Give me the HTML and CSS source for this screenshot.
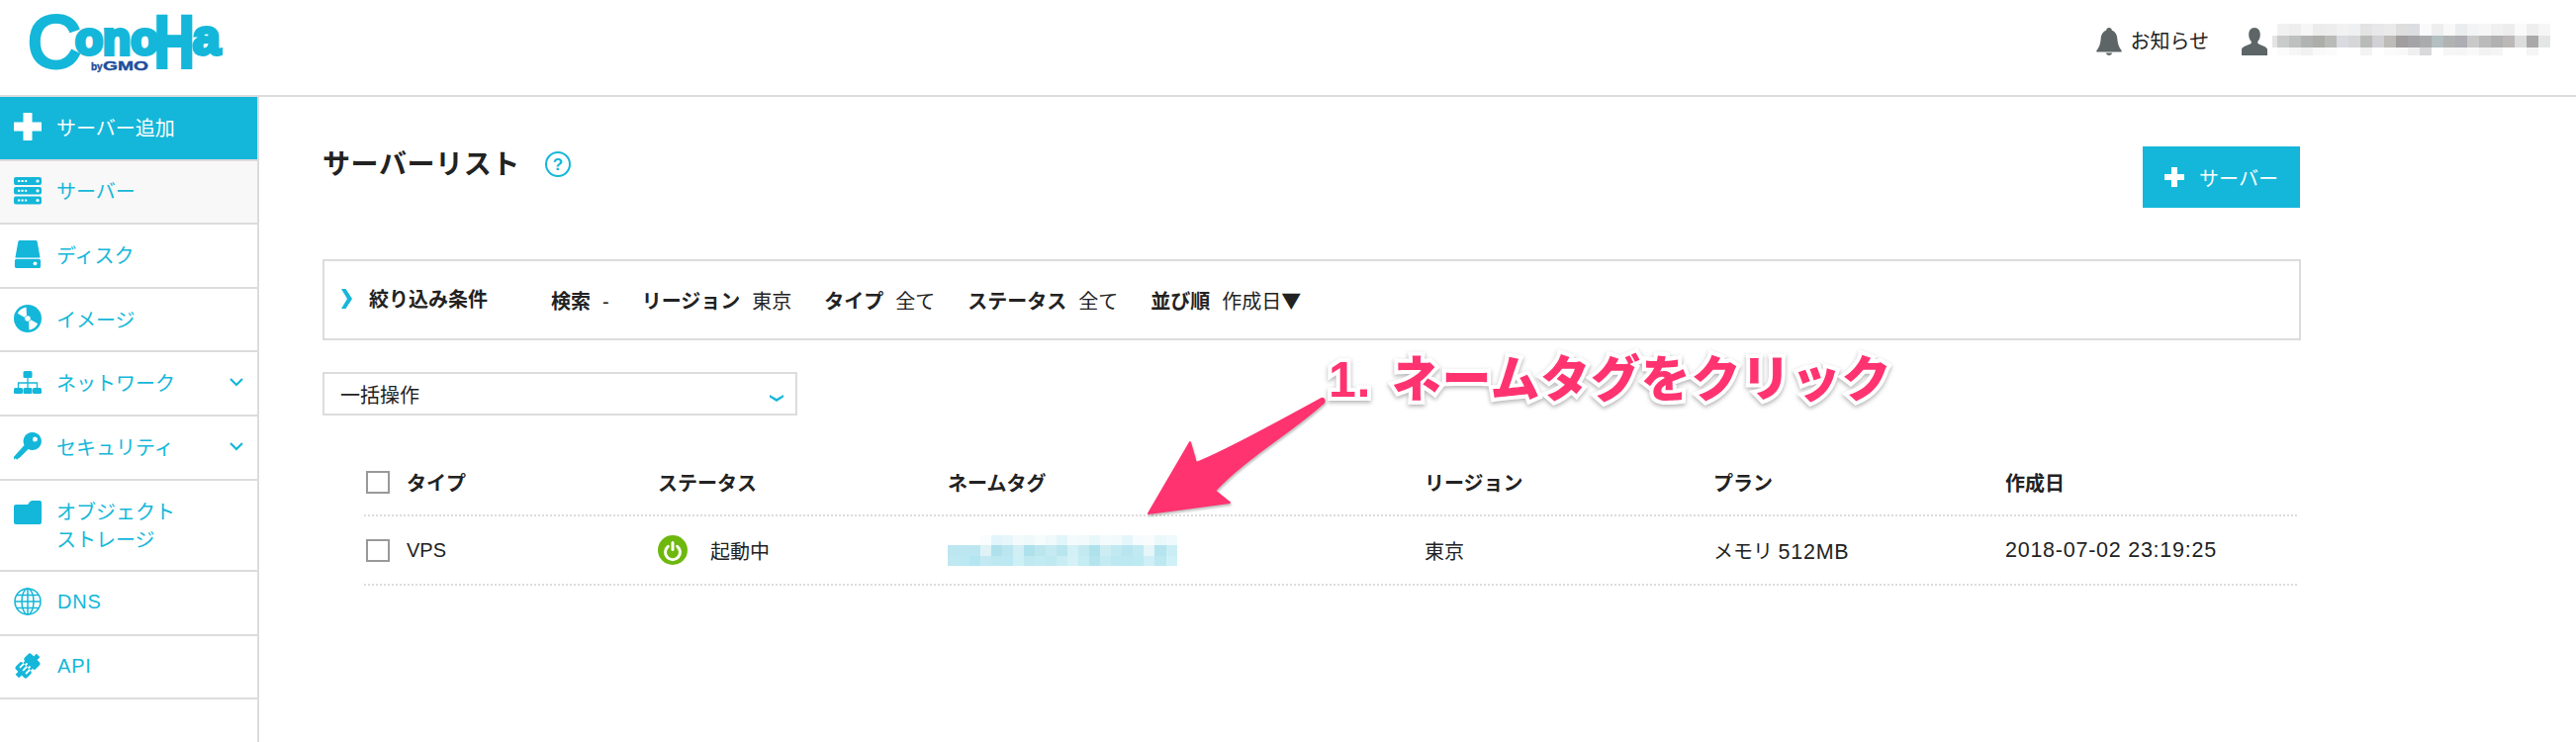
FILE: index.html
```html
<!DOCTYPE html>
<html lang="ja">
<head>
  <meta charset="UTF-8" />
  <title>ConoHa サーバーリスト</title>
  <link rel="stylesheet" href="styles.css">
</head>
<body>

  <!-- Header -->
  <header class="topbar">
    <svg class="logo" width="220" height="90" viewBox="0 0 220 90" role="img" aria-label="ConoHa by GMO">
      <g class="logo-word">
        <text><tspan x="8" y="62.500" font-size="74">C</tspan><tspan x="56" y="50" font-size="46" font-weight="700">ono</tspan></text>
        <text transform="translate(136 62.500) scale(.76 1)" font-size="74" font-weight="700">H</text>
        <text x="175" y="50" font-size="50" font-weight="700">a</text>
      </g>
      <text class="logo-gmo" x="72" y="66" font-size="10">by</text>
      <text class="logo-gmo" x="84" y="66" font-size="13" textLength="46" lengthAdjust="spacingAndGlyphs">GMO</text>
    </svg>
    <div class="topbar-right">
      <div class="topbar-item">
        <svg width="26" height="28" viewBox="0 0 26 28"><path fill="#5d6566" d="M13 0c1.700 0 2.800 1.200 2.900 2.800C19.500 4 21 7.300 21.300 11c.4 5 1.500 8.800 4.400 12.300.4.600 0 1.300-.7 1.300H1c-.7 0-1.100-.7-.7-1.300C3.200 19.800 4.300 16 4.700 11 5 7.300 6.500 4 10.100 2.800 10.200 1.200 11.300 0 13 0zM9.800 25.600h6.400c-.4 1.400-1.700 2.400-3.200 2.400s-2.800-1-3.200-2.400z"/></svg>
        <span class="notice">お知らせ</span>
      </div>
      <div class="topbar-item">
        <svg class="user-icon" width="26" height="28" viewBox="0 0 26 28"><path fill="#5d6566" d="M13 0c3.800 0 5.800 3 5.800 7 0 2.700-.9 5-2.200 6.500-.6.700-.6 2 0 2.600 1.500 1.500 8.400 2.500 9.400 5.600V28H0v-6.300c1-3.100 7.900-4.100 9.400-5.600.6-.6.600-1.900 0-2.600C8.100 12 7.200 9.700 7.200 7c0-4 2-7 5.800-7z"/></svg>
        <!-- pixelated mail address -->
        <svg class="blur-user" width="282" height="32" viewBox="0 0 282 32">
          <g transform="translate(5 0)">
            <rect x="0" width="12" height="12" fill="#f1f1f1"/><rect x="12" width="12" height="12" fill="#eeeeee"/><rect x="24" width="12" height="12" fill="#f6f6f6"/><rect x="36" width="12" height="12" fill="#ececec"/><rect x="48" width="12" height="12" fill="#ededed"/><rect x="60" width="12" height="12" fill="#f2f2f2"/><rect x="72" width="12" height="12" fill="#eff0f2"/><rect x="84" width="12" height="12" fill="#e3e3e3"/><rect x="96" width="12" height="12" fill="#e8e8ea"/><rect x="108" width="12" height="12" fill="#eaeaea"/><rect x="120" width="12" height="12" fill="#dededc"/><rect x="132" width="12" height="12" fill="#dcdde0"/><rect x="144" width="12" height="12" fill="#fafafa"/><rect x="156" width="12" height="12" fill="#eeeeee"/><rect x="168" width="12" height="12" fill="#f8f8f8"/><rect x="180" width="12" height="12" fill="#eaeded"/><rect x="192" width="12" height="12" fill="#f2f4f6"/><rect x="204" width="12" height="12" fill="#f6f6f6"/><rect x="216" width="12" height="12" fill="#f0f0f0"/><rect x="228" width="12" height="12" fill="#ededed"/><rect x="240" width="12" height="12" fill="#fafafa"/><rect x="252" width="12" height="12" fill="#eeeeee"/><rect x="264" width="12" height="12" fill="#f6f6f6"/>
            <rect x="-5" y="12" width="5" height="12" fill="#e4e4e4"/><rect x="0" y="12" width="12" height="12" fill="#c9cbcb"/><rect x="12" y="12" width="12" height="12" fill="#bcc0bf"/><rect x="24" y="12" width="12" height="12" fill="#b1b3b2"/><rect x="36" y="12" width="12" height="12" fill="#adadaa"/><rect x="48" y="12" width="12" height="12" fill="#b9bbb9"/><rect x="60" y="12" width="12" height="12" fill="#d9dbe0"/><rect x="72" y="12" width="12" height="12" fill="#d6d6d8"/><rect x="84" y="12" width="12" height="12" fill="#b9bbb9"/><rect x="96" y="12" width="12" height="12" fill="#d0d0d5"/><rect x="108" y="12" width="12" height="12" fill="#bdbcb8"/><rect x="120" y="12" width="12" height="12" fill="#a09e9e"/><rect x="132" y="12" width="12" height="12" fill="#a4a4a6"/><rect x="144" y="12" width="12" height="12" fill="#a9abad"/><rect x="156" y="12" width="12" height="12" fill="#b3bfc1"/><rect x="168" y="12" width="12" height="12" fill="#b1b3b3"/><rect x="180" y="12" width="12" height="12" fill="#adadb3"/><rect x="192" y="12" width="12" height="12" fill="#c8c9c8"/><rect x="204" y="12" width="12" height="12" fill="#bbbaba"/><rect x="216" y="12" width="12" height="12" fill="#b1b1b1"/><rect x="228" y="12" width="12" height="12" fill="#bbb8b7"/><rect x="240" y="12" width="12" height="12" fill="#dcdcdc"/><rect x="252" y="12" width="12" height="12" fill="#a9a9a9"/><rect x="264" y="12" width="12" height="12" fill="#e4e6e6"/>
            <rect x="0" y="24" width="12" height="8" fill="#fbfbfb"/><rect x="12" y="24" width="12" height="8" fill="#f6f6f6"/><rect x="24" y="24" width="12" height="8" fill="#f1f1f1"/><rect x="36" y="24" width="12" height="8" fill="#f9f9f9"/><rect x="48" y="24" width="12" height="8" fill="#fbfbfb"/><rect x="84" y="24" width="12" height="8" fill="#f3f3f3"/><rect x="108" y="24" width="12" height="8" fill="#fbfbfb"/><rect x="120" y="24" width="12" height="8" fill="#f9f9f9"/><rect x="132" y="24" width="12" height="8" fill="#f0f0f0"/><rect x="144" y="24" width="12" height="8" fill="#d9d9dc"/><rect x="168" y="24" width="12" height="8" fill="#f6f6f6"/><rect x="180" y="24" width="12" height="8" fill="#f5f5f5"/><rect x="192" y="24" width="12" height="8" fill="#f9f9f9"/><rect x="204" y="24" width="12" height="8" fill="#f2f2f2"/><rect x="216" y="24" width="12" height="8" fill="#f5f5f5"/><rect x="252" y="24" width="12" height="8" fill="#f5f5f5"/>
          </g>
        </svg>
      </div>
    </div>
  </header>

  <div class="layout">

    <!-- Sidebar -->
    <nav class="sidebar">
      <a class="side-item add">
        <svg class="side-icon" viewBox="0 0 28 28"><path fill="#fff" d="M9.500 0h9v9.500H28v9h-9.500V28h-9v-9.500H0v-9h9.500z"/></svg>
        サーバー追加
      </a>
      <a class="side-item current">
        <svg class="side-icon" viewBox="0 0 28 28"><g fill="#14b7d9"><rect y="0" width="28" height="8" rx="2"/><rect y="10" width="28" height="7.500" rx="2"/><rect y="19.500" width="28" height="8" rx="2"/></g><g fill="#fff"><circle cx="24" cy="4" r="1.600"/><circle cx="24" cy="13.800" r="1.600"/><circle cx="24" cy="23.500" r="1.600"/><rect x="4" y="3" width="2.200" height="2"/><rect x="7.500" y="3" width="2.200" height="2"/><rect x="11" y="3" width="2.200" height="2"/><rect x="4" y="12.800" width="2.200" height="2"/><rect x="7.500" y="12.800" width="2.200" height="2"/><rect x="11" y="12.800" width="2.200" height="2"/><rect x="4" y="22.500" width="2.200" height="2"/><rect x="7.500" y="22.500" width="2.200" height="2"/><rect x="11" y="22.500" width="2.200" height="2"/></g></svg>
        サーバー
      </a>
      <a class="side-item">
        <svg class="side-icon" viewBox="0 0 28 30"><path fill="#14b7d9" d="M5.500 0h17c1 0 1.700.7 1.900 1.600L27.500 18.800H.5L3.600 1.600C3.800.7 4.500 0 5.500 0zM2 20h24c1.100 0 2 .9 2 2v6c0 1.100-.9 2-2 2H2c-1.100 0-2-.9-2-2v-6c0-1.100.9-2 2-2z"/><circle cx="22" cy="25" r="2" fill="#fff"/></svg>
        ディスク
      </a>
      <a class="side-item">
        <svg class="side-icon" viewBox="0 0 28 28"><circle cx="14" cy="14" r="14" fill="#14b7d9"/><path fill="#fff" d="M12.500 2.500 13 10.800a3.500 3.500 0 0 0-2.300 2L3.800 8.700a12 12 0 0 1 8.700-6.200zM15.500 25.500 15 17.200a3.500 3.500 0 0 0 2.300-2l6.900 4.100a12 12 0 0 1-8.700 6.200z"/><circle cx="14" cy="14" r="2.800" fill="#fff"/></svg>
        イメージ
      </a>
      <a class="side-item">
        <svg class="side-icon" viewBox="0 0 28 24"><g fill="#14b7d9"><rect x="9.500" width="9" height="7" rx="1.500"/><rect y="17" width="9" height="6" rx="1.500"/><rect x="9.500" y="17" width="9" height="6" rx="1.500"/><rect x="19" y="17" width="9" height="6" rx="1.500"/></g><path fill="none" stroke="#14b7d9" stroke-width="1.300" d="M14 7v10M4.500 17v-5h19v5"/></svg>
        ネットワーク
        <svg class="side-caret" viewBox="0 0 14 9"><path fill="none" stroke="#14b7d9" stroke-width="2.200" d="M1 1l6 6 6-6"/></svg>
      </a>
      <a class="side-item">
        <svg class="side-icon" viewBox="0 0 28 28"><path fill="#14b7d9" fill-rule="evenodd" d="M19 0a9 9 0 1 1-4.400 16.900L5.500 26l-1 .2-1.200 1.500-1.500-1.500L0 27.500v-2.700L10.500 13A9 9 0 0 1 19 0zm2.500 4.500a2.500 2.500 0 1 0 0 5 2.500 2.500 0 0 0 0-5z"/></svg>
        セキュリティ
        <svg class="side-caret" viewBox="0 0 14 9"><path fill="none" stroke="#14b7d9" stroke-width="2.200" d="M1 1l6 6 6-6"/></svg>
      </a>
      <a class="side-item tall">
        <svg class="side-icon" viewBox="0 0 28 24"><path fill="#14b7d9" d="M2 4h11c1 0 1.500-.4 2-1.200C16 1 17 0 19 0h7c1.100 0 2 .9 2 2v20c0 1.100-.9 2-2 2H2c-1.100 0-2-.9-2-2V6c0-1.100.9-2 2-2z"/></svg>
        <span>オブジェクト<br>ストレージ</span>
      </a>
      <a class="side-item">
        <svg class="side-icon" viewBox="0 0 28 28"><g fill="none" stroke="#14b7d9" stroke-width="1.500"><circle cx="14" cy="14" r="13"/><ellipse cx="14" cy="14" rx="6" ry="13"/><path d="M14 1v26M1 14h26M3 7.500h22M3 20.500h22"/></g></svg>
        <span class="latin">DNS</span>
      </a>
      <a class="side-item">
        <svg class="side-icon" viewBox="0 0 28 28"><g transform="rotate(-45 14 14)"><rect x="-1" y="11.500" width="5" height="5" fill="#14b7d9"/><rect x="24" y="11.500" width="5" height="5" fill="#14b7d9"/><rect x="3" y="6" width="9.500" height="16" rx="2" fill="#14b7d9"/><rect x="15.500" y="6" width="9.500" height="16" rx="2" fill="#14b7d9"/><g fill="#14b7d9"><rect x="11" y="8.500" width="6" height="2.400"/><rect x="11" y="12.800" width="6" height="2.400"/><rect x="11" y="17.100" width="6" height="2.400"/></g><g fill="#fff"><rect x="7" y="8.800" width="6" height="1.800"/><rect x="7" y="13.100" width="6" height="1.800"/><rect x="7" y="17.400" width="6" height="1.800"/></g></g></svg>
        <span class="latin">API</span>
      </a>
    </nav>

    <!-- Main -->
    <main class="main">
      <div class="title-row">
        <div class="title">
          <h1>サーバーリスト</h1>
          <svg width="26" height="26" viewBox="0 0 26 26"><circle cx="13" cy="13" r="12" fill="none" stroke="#14b7d9" stroke-width="2"/><text x="13" y="19" text-anchor="middle" class="help-mark">?</text></svg>
        </div>
        <a class="add-btn">
          <svg width="20" height="20" viewBox="0 0 20 20"><path fill="#fff" d="M7 0h6v7h7v6h-7v7H7v-7H0V7h7z"/></svg>
          サーバー
        </a>
      </div>

      <div class="filter">
        <svg class="filter-arrow" width="11" height="20" viewBox="0 0 11 20"><path fill="#14b7d9" d="M0 0h4.500L11 10 4.500 20H0l6-10z"/></svg>
        <strong class="filter-label">絞り込み条件</strong>
        <div class="filter-item"><b>検索</b>-</div>
        <div class="filter-item"><b>リージョン</b>東京</div>
        <div class="filter-item"><b>タイプ</b>全て</div>
        <div class="filter-item"><b>ステータス</b>全て</div>
        <div class="filter-item"><b>並び順</b>作成日<span class="tri">▼</span></div>
      </div>

      <div class="bulk-select">
        一括操作
        <svg width="14" height="7" viewBox="0 0 14 7"><path fill="#14b7d9" d="M0 0l7 4 7-4v2.500L7 7 0 2.500z"/></svg>
      </div>

      <div class="server-list">
        <div class="list-row head">
          <div class="type-cell"><span class="check"></span>タイプ</div>
          <div>ステータス</div>
          <div>ネームタグ</div>
          <div>リージョン</div>
          <div>プラン</div>
          <div>作成日</div>
        </div>
        <div class="list-row">
          <div class="type-cell"><span class="check"></span>VPS</div>
          <div class="status">
            <svg width="30" height="30" viewBox="0 0 30 30"><circle cx="15" cy="15" r="15" fill="#6eb80e"/><path fill="none" stroke="#fff" stroke-width="3" stroke-linecap="round" d="M10.300 11.300a7.500 7.500 0 1 0 9.400 0M15 7.500v7"/></svg>
            起動中
          </div>
          <div>
            <!-- pixelated name tag -->
            <svg class="blur-tag" width="232" height="31" viewBox="0 0 232 31">
              <rect x="33" width="11" height="10" fill="#f9fdfe"/><rect x="44" width="11" height="10" fill="#e2f5fa"/><rect x="55" width="11" height="10" fill="#e6f6fa"/><rect x="66" width="11" height="10" fill="#f2fafc"/><rect x="77" width="11" height="10" fill="#eff8fa"/><rect x="88" width="11" height="10" fill="#f6fbfc"/><rect x="99" width="11" height="10" fill="#eff9fb"/><rect x="110" width="11" height="10" fill="#e2f5f9"/><rect x="121" width="11" height="10" fill="#f4fbfd"/><rect x="132" width="11" height="10" fill="#f3fafc"/><rect x="143" width="11" height="10" fill="#e8f7f9"/><rect x="154" width="11" height="10" fill="#f4fbfc"/><rect x="165" width="11" height="10" fill="#f3fafc"/><rect x="176" width="11" height="10" fill="#e5f6fa"/><rect x="187" width="11" height="10" fill="#f6fbfd"/><rect x="198" width="11" height="10" fill="#f8fcfd"/><rect x="209" width="12" height="10" fill="#eaf8fa"/><rect x="221" width="11" height="10" fill="#eefafc"/>
              <rect x="0" y="10" width="11" height="11" fill="#bce6f0"/><rect x="11" y="10" width="11" height="11" fill="#bce6f0"/><rect x="22" y="10" width="11" height="11" fill="#bde7f0"/><rect x="33" y="10" width="11" height="11" fill="#dff3f7"/><rect x="44" y="10" width="11" height="11" fill="#aee1ec"/><rect x="55" y="10" width="11" height="11" fill="#bbe6ef"/><rect x="66" y="10" width="11" height="11" fill="#d0eef4"/><rect x="77" y="10" width="11" height="11" fill="#aee1ec"/><rect x="88" y="10" width="11" height="11" fill="#bce6ee"/><rect x="99" y="10" width="11" height="11" fill="#c6eaf1"/><rect x="110" y="10" width="11" height="11" fill="#b9e6ee"/><rect x="121" y="10" width="11" height="11" fill="#d3f0f5"/><rect x="132" y="10" width="11" height="11" fill="#c3eaf1"/><rect x="143" y="10" width="11" height="11" fill="#ade2ec"/><rect x="154" y="10" width="11" height="11" fill="#cdedf3"/><rect x="165" y="10" width="11" height="11" fill="#c1e9f1"/><rect x="176" y="10" width="11" height="11" fill="#b8e5ef"/><rect x="187" y="10" width="11" height="11" fill="#c1e9f1"/><rect x="198" y="10" width="11" height="11" fill="#e6f5f8"/><rect x="209" y="10" width="12" height="11" fill="#b6e4ee"/><rect x="221" y="10" width="11" height="11" fill="#cbeef4"/>
              <rect x="0" y="21" width="11" height="10" fill="#bfe8f1"/><rect x="11" y="21" width="11" height="10" fill="#bbe8f1"/><rect x="22" y="21" width="11" height="10" fill="#b4e6f1"/><rect x="33" y="21" width="11" height="10" fill="#c3eaf4"/><rect x="44" y="21" width="11" height="10" fill="#bde8f2"/><rect x="55" y="21" width="11" height="10" fill="#bbe8f2"/><rect x="66" y="21" width="11" height="10" fill="#ccf0f6"/><rect x="77" y="21" width="11" height="10" fill="#bfe9f1"/><rect x="88" y="21" width="11" height="10" fill="#c2eaf2"/><rect x="99" y="21" width="11" height="10" fill="#bfe9f1"/><rect x="110" y="21" width="11" height="10" fill="#c9edf4"/><rect x="121" y="21" width="11" height="10" fill="#d3f1f7"/><rect x="132" y="21" width="11" height="10" fill="#c3ecf3"/><rect x="143" y="21" width="11" height="10" fill="#b4e5ef"/><rect x="154" y="21" width="11" height="10" fill="#c4ebf2"/><rect x="165" y="21" width="11" height="10" fill="#bce8f1"/><rect x="176" y="21" width="11" height="10" fill="#bbe8f1"/><rect x="187" y="21" width="11" height="10" fill="#bde9f2"/><rect x="198" y="21" width="11" height="10" fill="#cfeff6"/><rect x="209" y="21" width="12" height="10" fill="#bbe8f1"/><rect x="221" y="21" width="11" height="10" fill="#d0f0f7"/>
            </svg>
          </div>
          <div>東京</div>
          <div>メモリ <span class="num">512MB</span></div>
          <div class="num">2018-07-02 23:19:25</div>
        </div>
      </div>
    </main>
  </div>

  <!-- Annotation drawn over the screen -->
  <svg class="note-arrow" width="190" height="130" viewBox="0 0 190 130">
    <path fill="#ff3370" stroke="#ff3370" stroke-width="2" stroke-linejoin="round" d="M1 127 L43 55 L49 76 C70 68 105 50 176 11 C179 10 179 14 178 15 C145 45 100 70 68 104 L83 116 Z"/>
  </svg>
  <div class="note-text">1. ネームタグをクリック</div>

</body>
</html>
```

FILE: styles.css
```css
:root {
  --blue: #14b7d9;
  --line: #dcdcdc;
  --text: #222;
  --pink: #ff3370;
}

* {
  margin: 0;
  padding: 0;
  box-sizing: border-box;
}

body {
  position: relative;
  width: 2604px;
  height: 750px;
  overflow: hidden;
  background: #fff;
  color: var(--text);
  font-family: "Liberation Sans", "Noto Sans CJK JP", sans-serif;
  font-size: 20px;
}

svg {
  display: block;
  flex-shrink: 0;
}

/* Header */
.topbar {
  display: flex;
  justify-content: space-between;
  height: 98px;
  padding: 5px 25px 0 20px;
  border-bottom: 2px solid var(--line);
}

.logo-word text {
  font-family: "Liberation Sans", sans-serif;
  fill: var(--blue);
  stroke: var(--blue);
  stroke-width: 4;
}

.logo-gmo {
  font-family: "Liberation Sans", sans-serif;
  font-weight: 700;
  fill: #1f4e9c;
  stroke: #1f4e9c;
  stroke-width: 0.4;
}

.topbar-right {
  display: flex;
  gap: 33px;
  padding-top: 23px;
}

.topbar-item {
  display: flex;
  gap: 8px;
  height: 28px;
  align-items: center;
}

.notice {
  margin-top: -3px;
}

.user-icon {
  margin-right: -3px;
}

.blur-user {
  margin-top: -4px;
}

/* Sidebar */
.layout {
  display: flex;
  height: 652px;
}

.sidebar {
  width: 262px;
  border-right: 2px solid var(--line);
}

.side-item {
  display: flex;
  align-items: center;
  height: 64.6px;
  padding: 0 14px 2px;
  gap: 15px;
  color: var(--blue);
  border-bottom: 2px solid var(--line);
}

.side-item.add {
  background: var(--blue);
  color: #fff;
}

.side-item.current {
  background: #f8f8f8;
}

.side-item.tall {
  height: 92.6px;
  align-items: flex-start;
  padding-top: 18px;
  line-height: 28px;
}

.side-icon {
  width: 28px;
  height: 28px;
}

.side-caret {
  width: 14px;
  height: 9px;
  margin-left: auto;
}

.latin {
  margin-left: 1px;
  letter-spacing: 0.8px;
}

/* Main */
.main {
  width: 2064px;
  padding: 50px 0 0 64px;
}

.title-row {
  display: flex;
  justify-content: space-between;
  align-items: flex-start;
  height: 62px;
  margin-bottom: 52px;
}

.title {
  display: flex;
  align-items: center;
  gap: 25px;
  height: 36px;
}

.title h1 {
  margin-top: 2px;
  font-size: 28px;
  line-height: 36px;
  font-weight: 700;
  letter-spacing: 0.6px;
}

.help-mark {
  font-family: "Liberation Sans", sans-serif;
  font-size: 17px;
  font-weight: 700;
  fill: var(--blue);
}

.add-btn {
  display: flex;
  align-items: center;
  justify-content: center;
  gap: 15px;
  width: 159px;
  height: 62px;
  margin-right: 1px;
  background: var(--blue);
  color: #fff;
}

.filter {
  display: flex;
  align-items: center;
  width: 2000px;
  height: 82px;
  padding-left: 17px;
  border: 2px solid var(--line);
}

.filter-arrow {
  margin: -2px 17px 0 0;
}

.filter-label {
  width: 184px;
  margin-top: -3px;
}

.filter-item {
  margin-right: 33px;
}

.filter-item b {
  margin-right: 12px;
}

.tri {
  font-family: "Noto Sans CJK JP", sans-serif;
}

.bulk-select {
  display: flex;
  justify-content: space-between;
  align-items: center;
  width: 480px;
  height: 44px;
  margin-top: 32px;
  padding: 0 12px 0 16px;
  border: 2px solid var(--line);
}

.bulk-select svg {
  margin-top: 8px;
}

/* Server table */
.server-list {
  width: 1954px;
  margin: 34px 0 0 42px;
}

.list-row {
  display: grid;
  grid-template-columns: 297px 293px 482px 292px 295px 1fr;
  align-items: center;
  height: 70px;
  border-bottom: 2px dotted var(--line);
}

.list-row.head {
  height: 68px;
  font-weight: 700;
}

.type-cell {
  display: flex;
  align-items: center;
  gap: 17px;
  padding-left: 2px;
}

.check {
  width: 24px;
  height: 23px;
  border: 2px solid #999;
}

.status {
  display: flex;
  align-items: center;
  gap: 23px;
}

.num {
  font-size: 21.5px;
  letter-spacing: 0.75px;
}

/* Annotation */
.note-arrow {
  position: absolute;
  left: 1160px;
  top: 392px;
  filter: drop-shadow(1px 2px 1px rgba(0, 0, 0, 0.25));
}

.note-text {
  position: absolute;
  left: 1343px;
  top: 350px;
  font-size: 50px;
  line-height: 68px;
  font-weight: 900;
  letter-spacing: 0.7px;
  word-spacing: 6px;
  white-space: nowrap;
  color: var(--pink);
  -webkit-text-stroke: 8px #fff;
  paint-order: stroke fill;
  filter: drop-shadow(0 2px 2px rgba(0, 0, 0, 0.3));
}
```
